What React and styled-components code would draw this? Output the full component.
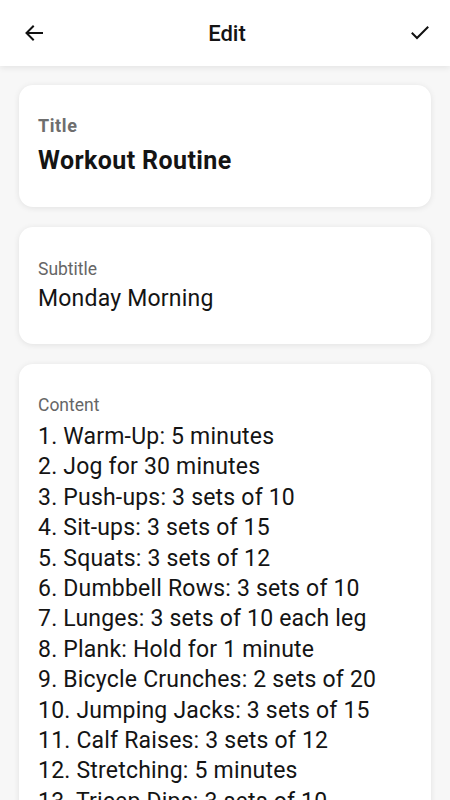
import React from "react";
import styled, { createGlobalStyle } from "styled-components";

const Global = createGlobalStyle`
  html, body { margin: 0; padding: 0; background: #f7f7f7; }
  body { font-family: Roboto, "Noto Sans", sans-serif; -webkit-font-smoothing: antialiased; }
  * { box-sizing: border-box; }
`;

const Page = styled.div`
  width: 450px;
  height: 800px;
  overflow: hidden;
  background: #f7f7f7;
  display: flex;
  flex-direction: column;
`;

const Toolbar = styled.header`
  height: 66px;
  flex: 0 0 66px;
  background: #ffffff;
  display: flex;
  align-items: center;
  justify-content: space-between;
  padding: 0 14px 0 18px;
  box-shadow: 0 2px 6px rgba(0, 0, 0, 0.08);
  position: relative;
  z-index: 1;
`;

const IconButton = styled.button`
  width: 32px;
  height: 32px;
  border: none;
  background: none;
  padding: 0;
  display: flex;
  align-items: center;
  justify-content: center;
  color: #111;
`;

const ToolbarTitle = styled.h1`
  margin: 0;
  font-size: 22px;
  font-weight: 500;
  color: #141414;
`;

const Body = styled.main`
  display: flex;
  flex-direction: column;
  gap: 20px;
  padding: 19px 19px 0;
`;

const Card = styled.section`
  background: #ffffff;
  border-radius: 14px;
  box-shadow: 0 1px 6px rgba(0, 0, 0, 0.09);
  padding: ${(p) => p.$pad || "30px 19px 34px"};
  display: flex;
  flex-direction: column;
  gap: ${(p) => p.$gap || "8px"};
`;

const Label = styled.div`
  font-size: ${(p) => (p.$bold ? "18px" : "17.5px")};
  font-weight: ${(p) => (p.$bold ? 700 : 400)};
  line-height: ${(p) => (p.$bold ? "22px" : "20px")};
  letter-spacing: ${(p) => (p.$bold ? "0.6px" : "0")};
  color: ${(p) => (p.$bold ? "#6e6e6e" : "#666666")};
`;

const Value = styled.div`
  font-size: ${(p) => (p.$bold ? "25px" : "23px")};
  font-weight: ${(p) => (p.$bold ? 700 : 400)};
  line-height: ${(p) => (p.$bold ? "30px" : "28px")};
  letter-spacing: ${(p) => (p.$bold ? "0.4px" : "0.2px")};
  color: #141414;
`;

const Lines = styled.div`
  font-size: 23px;
  line-height: 30.4px;
  letter-spacing: 0.2px;
  color: #141414;
  white-space: pre-line;
`;

const content = [
  "1. Warm-Up: 5 minutes",
  "2. Jog for 30 minutes",
  "3. Push-ups: 3 sets of 10",
  "4. Sit-ups: 3 sets of 15",
  "5. Squats: 3 sets of 12",
  "6. Dumbbell Rows: 3 sets of 10",
  "7. Lunges: 3 sets of 10 each leg",
  "8. Plank: Hold for 1 minute",
  "9. Bicycle Crunches: 2 sets of 20",
  "10. Jumping Jacks: 3 sets of 15",
  "11. Calf Raises: 3 sets of 12",
  "12. Stretching: 5 minutes",
  "13. Tricep Dips: 3 sets of 10",
  "14. Cool Down: 5 minutes",
];

export default function App() {
  return (
    <Page>
      <Global />
      <Toolbar>
        <IconButton aria-label="Back">
          <svg width="24" height="24" viewBox="0 0 24 24" fill="none" stroke="currentColor" strokeWidth="2" strokeLinecap="square">
            <path d="M20 12H5" />
            <path d="M11 5.5 4.5 12l6.5 6.5" />
          </svg>
        </IconButton>
        <ToolbarTitle>Edit</ToolbarTitle>
        <IconButton aria-label="Save">
          <svg width="24" height="24" viewBox="0 0 24 24" fill="none" stroke="currentColor" strokeWidth="2" strokeLinecap="square">
            <path d="M4.5 12.5 9 17 19.5 6.5" />
          </svg>
        </IconButton>
      </Toolbar>
      <Body>
        <Card $pad="30px 19px 31px" $gap="9px">
          <Label $bold>Title</Label>
          <Value $bold>Workout Routine</Value>
        </Card>
        <Card $pad="32px 19px 31px" $gap="6px">
          <Label>Subtitle</Label>
          <Value>Monday Morning</Value>
        </Card>
        <Card $pad="31px 19px 30px" $gap="7px">
          <Label>Content</Label>
          <Lines>{content.join("\n")}</Lines>
        </Card>
      </Body>
    </Page>
  );
}
